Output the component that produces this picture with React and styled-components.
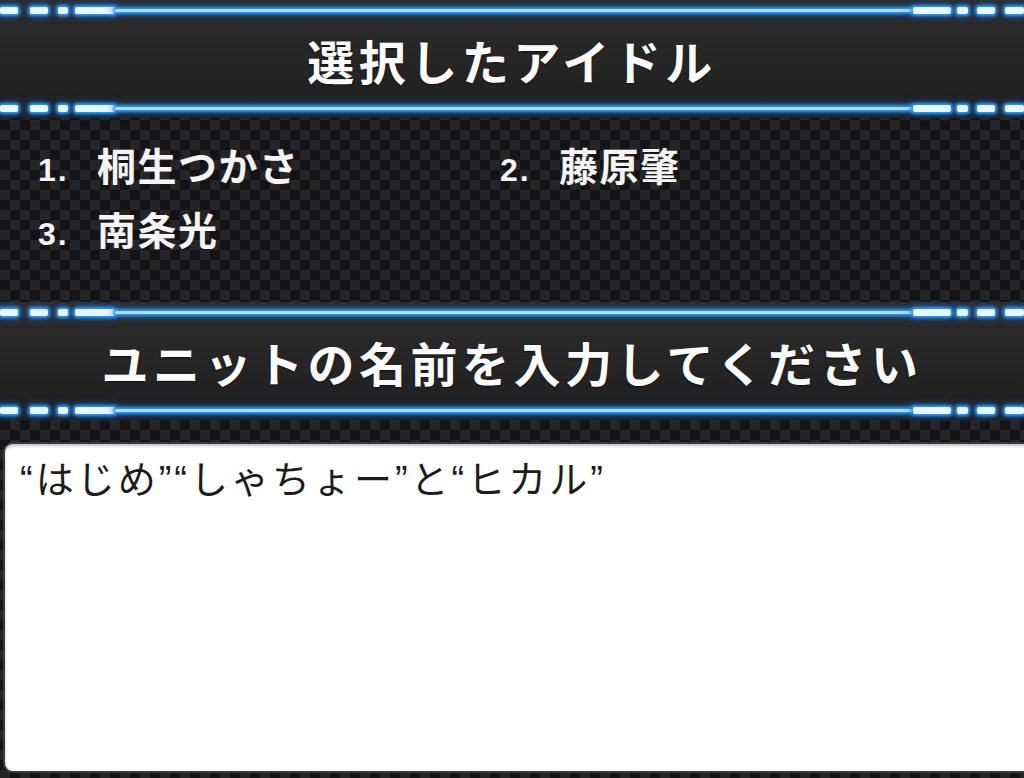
import React from 'react'
import styled, {createGlobalStyle} from 'styled-components'

const GlobalStyle = createGlobalStyle`
    html, body {
        margin: 0;
        padding: 0;
        background: #18181a;
    }
    body {
        font-family: "Liberation Sans", "Noto Sans CJK JP", sans-serif;
    }
`

const Screen = styled.div`
    width: 1024px;
    height: 778px;
    overflow: hidden;
    display: flex;
    flex-direction: column;
    background-color: #141416;
    background-image: conic-gradient(#252528 25%, transparent 0 50%, #252528 0 75%, transparent 0);
    background-size: 20px 20px;
`

const Banner = styled.div`
    display: flex;
    flex-direction: column;
    background: linear-gradient(180deg, #2c2c2c 0%, #262626 50%, #1f1f1f 100%);
`

const GlowRow = styled.div`
    height: 20px;
    display: flex;
    align-items: center;
`

const Dash = styled.div`
    flex: ${props => props.$grow ? 1 : 'none'};
    width: ${props => props.$w ? `${props.$w}px` : 'auto'};
    margin-left: ${props => props.$ml || 0}px;
    height: ${props => props.$thin ? 3 : 7}px;
    border-radius: 2px;
    background: ${props => props.$thin ? '#a9e2ff' : '#e6f8ff'};
    box-shadow: 0 0 3px 2px #2f9cf0, 0 0 8px 2px rgba(24, 110, 220, 0.7);
`

const Title = styled.h1`
    margin: 0;
    height: 78px;
    display: flex;
    align-items: center;
    justify-content: center;
    color: #fafafa;
    font-family: "Noto Sans CJK JP", sans-serif;
    font-weight: 700;
    font-size: 47px;
    letter-spacing: 4.5px;
    text-shadow: 0 1px 2px rgba(0, 0, 0, 0.6);
`

const IdolList = styled.ol`
    list-style: none;
    margin: 0;
    height: 184px;
    box-sizing: border-box;
    padding: 14px 0 0 38px;
    display: grid;
    grid-template-columns: 462px 1fr;
    grid-auto-rows: 64px;
    align-content: start;
`

const Idol = styled.li`
    display: flex;
    align-items: baseline;
    color: #f4f4f4;
    line-height: 64px;
`

const Num = styled.span`
    width: 59px;
    font-family: "Liberation Sans", sans-serif;
    font-weight: 700;
    font-size: 32px;
    letter-spacing: 2px;
`

const Name = styled.span`
    font-family: "Noto Sans CJK JP", sans-serif;
    font-weight: 700;
    font-size: 39px;
    letter-spacing: 1.5px;
`

const Spacer = styled.div`
    height: 22px;
    flex: none;
`

const InputBox = styled.div`
    flex: 1;
    margin: 0 -10px 5px 3px;
    background: #fff;
    border: 2px solid #3a3a3a;
    border-right: none;
    border-radius: 10px 0 0 10px;
    box-shadow: inset 0 2px 3px rgba(0, 0, 0, 0.25);
    padding: 10px 15px;
`

const InputText = styled.p`
    margin: 0;
    color: #1c1c1c;
    font-family: "Liberation Sans", "Noto Sans CJK JP", sans-serif;
    font-size: 38px;
    letter-spacing: 3px;
    line-height: 52px;
`

const GlowBar = () => (
    <GlowRow>
        <Dash $w={18} />
        <Dash $w={18} $ml={12} />
        <Dash $w={10} $ml={10} />
        <Dash $w={40} $ml={7} />
        <Dash $grow $thin />
        <Dash $w={38} />
        <Dash $w={11} $ml={6} />
        <Dash $w={18} $ml={9} />
        <Dash $w={19} $ml={10} />
    </GlowRow>
)

const SectionBanner = ({children}) => (
    <Banner>
        <GlowBar />
        <Title>{children}</Title>
        <GlowBar />
    </Banner>
)

const idols = [
    {num: 1, name: '桐生つかさ'},
    {num: 2, name: '藤原肇'},
    {num: 3, name: '南条光'},
]

const App = () => {
    return (
        <>
            <GlobalStyle />
            <Screen>
                <SectionBanner>選択したアイドル</SectionBanner>
                <IdolList>
                    {idols.map(idol => (
                        <Idol key={idol.num}>
                            <Num>{idol.num}.</Num>
                            <Name>{idol.name}</Name>
                        </Idol>
                    ))}
                </IdolList>
                <SectionBanner>ユニットの名前を入力してください</SectionBanner>
                <Spacer />
                <InputBox>
                    <InputText>“はじめ”“しゃちょー”と“ヒカル”</InputText>
                </InputBox>
            </Screen>
        </>
    )
}

export default App
